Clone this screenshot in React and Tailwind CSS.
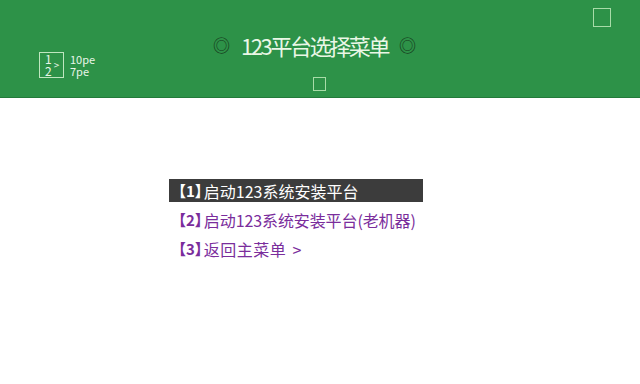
export default function App() {
  const font = { fontFamily: '"Noto Sans CJK SC", "Noto Sans", sans-serif' };
  return (
    <div className="w-[640px] h-[384px] bg-white overflow-hidden" style={font}>
      <div className="relative h-[98px] bg-[#2d9248] border-b border-[#237a3a]">
        <div className="absolute left-[593px] top-[8px] w-[18px] h-[19px] border border-[#a8dca8]" />
        <div className="absolute left-[313px] top-[77px] w-[13px] h-[14px] border border-[#a8dca8]" />
        <div className="absolute left-[39px] top-[52px] flex items-center gap-[6px]">
          <div className="w-[25px] h-[26px] border border-[#bfe6bf] flex items-center pl-[5px] gap-[2px] text-[#e8f5e8]">
            <div className="flex flex-col text-[12px] leading-[12px]">
              <span>1</span>
              <span>2</span>
            </div>
            <span className="text-[10px] leading-none">&gt;</span>
          </div>
          <div className="flex flex-col text-[11px] leading-[12px] text-[#e8f5e8]">
            <span>10pe</span>
            <span>7pe</span>
          </div>
        </div>
        <div className="absolute left-[213px] top-[30px] flex items-center gap-[11px]">
          <span className="text-[17px] text-[#15361b]">◎</span>
          <span className="text-[22px] text-[#eaf7e6] tracking-[-2.4px] leading-[30px]">123平台选择菜单</span>
          <span className="text-[17px] text-[#15361b]">◎</span>
        </div>
      </div>
      <div className="pt-[81px] pl-[169px] flex flex-col gap-[7px] text-[16px] leading-[22px]">
        <div className="w-[254px] h-[23px] bg-[#3c3c3c] text-white flex items-center pl-[2px] whitespace-pre">
          <span className="font-bold text-[15px] -mr-[6px]">【1】</span><span>启动123系统安装平台</span>
        </div>
        <div className="h-[22px] text-[#7a2d9c] flex items-center pl-[2px] whitespace-pre">
          <span className="font-bold text-[15px] -mr-[6px]">【2】</span><span className="tracking-[-0.1px]">启动123系统安装平台(老机器)</span>
        </div>
        <div className="h-[22px] text-[#7a2d9c] flex items-center pl-[2px] whitespace-pre">
          <span className="font-bold text-[15px] -mr-[6px]">【3】</span><span className="tracking-[0.5px]">返回主菜单</span><span className="ml-[6px]">&gt;</span>
        </div>
      </div>
    </div>
  );
}
